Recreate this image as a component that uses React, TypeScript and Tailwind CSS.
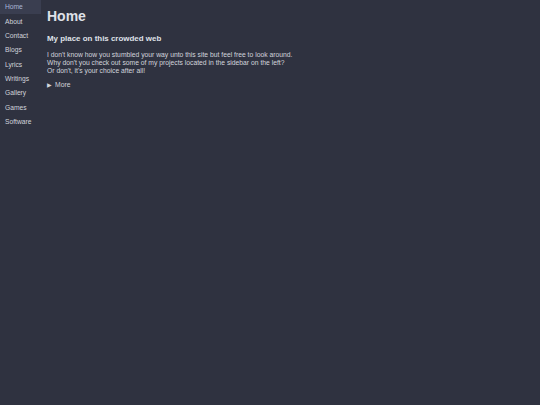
import React from "react";

const items = ["Home", "About", "Contact", "Blogs", "Lyrics", "Writings", "Gallery", "Games", "Software"];

export default function App() {
  return (
    <div
      className="w-[540px] h-[405px] bg-[#2f3240] text-[#d2d4dc] flex"
      style={{ fontFamily: '"Liberation Sans", Arial, sans-serif' }}
    >
      <nav className="w-[41px] flex flex-col">
        {items.map((it, i) => (
          <div
            key={it}
            className={
              "h-[14.35px] pl-[5px] pt-[1px] flex items-center text-[6.7px] leading-none " +
              (i === 0 ? "bg-[#3a3e50] text-[#a9b6d8]" : "text-[#d2d4dc]")
            }
          >
            {it}
          </div>
        ))}
      </nav>
      <main className="pl-[6px] pt-[9px]">
        <h1 className="text-[14px] font-bold leading-none text-[#dfe1e8]">Home</h1>
        <h2 className="mt-[12px] text-[7.95px] font-bold leading-none text-[#dfe1e8]">My place on this crowded web</h2>
        <div className="mt-[8px] text-[6.77px] leading-[8px]">
          <p>I don't know how you stumbled your way unto this site but feel free to look around.</p>
          <p>Why don't you check out some of my projects located in the sidebar on the left?</p>
          <p>Or don't, it's your choice after all!</p>
        </div>
        <div className="mt-[7px] flex items-center gap-[3px] text-[6.77px] leading-none">
          <span className="text-[5.5px]">▶</span>
          <span>More</span>
        </div>
      </main>
    </div>
  );
}
